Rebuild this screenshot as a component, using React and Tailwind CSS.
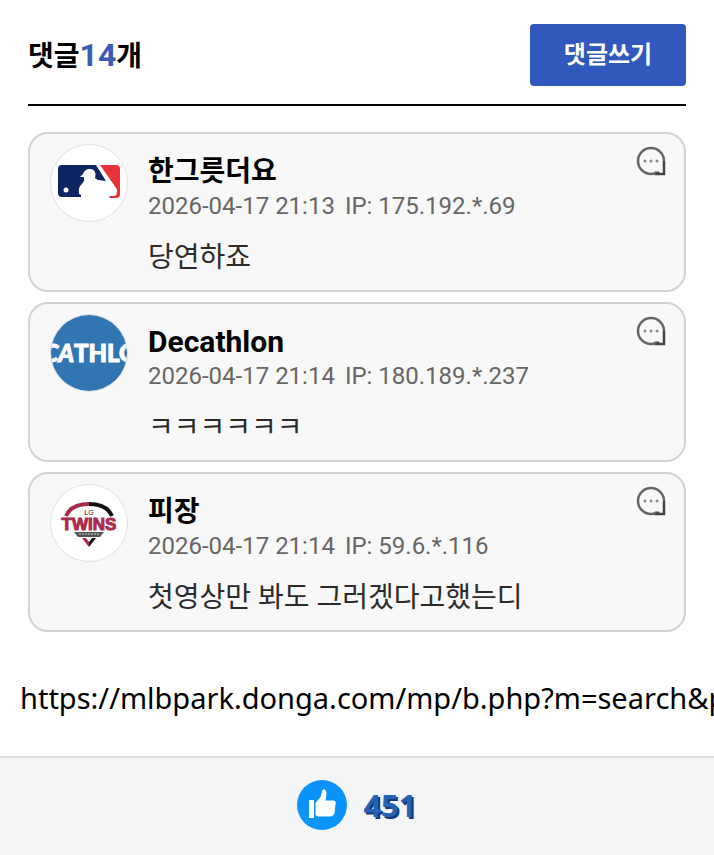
const MlbLogo = () => (
  <svg viewBox="0 0 76 76" className="size-full">
    <path
      d="M11 20H45L55 36l-8-1-3-2c1-3 1-9-5-9-4 0-6 2-7 5l-3 3h4v4l-2 3c-4 3-3 7-3 10l2 1v2H11a4 4 0 0 1-4-4V24a4 4 0 0 1 4-4z"
      fill="#0f2463"
    />
    <path
      d="M49 20h16a4 4 0 0 1 4 4v25a4 4 0 0 1-4 4h-6c-1-1-1-2 0-2h3c3 0 4-2 4-5 0-3-2-4-3-6z"
      fill="#e8323c"
    />
    <circle cx="15" cy="45" r="2.5" fill="#fff" />
  </svg>
);

const DecathlonLogo = () => (
  <svg viewBox="0 0 76 76" className="size-full">
    <rect width="76" height="76" fill="#3275b3" />
    <text
      x="40"
      y="47"
      textAnchor="middle"
      fill="#fff"
      stroke="#fff"
      strokeWidth="1"
      className="font-['Lato'] text-[24px] font-black"
    >
      <tspan className="italic">CA</tspan>THLO
    </text>
  </svg>
);

const TwinsLogo = () => (
  <svg viewBox="0 0 76 76" className="size-full">
    <path d="M15 31C19 22 29 19 38 19" fill="none" stroke="#a92a4b" strokeWidth="4" />
    <path d="M38 19c9 0 19 3 23 12" fill="none" stroke="#111" strokeWidth="4" />
    <text x="38" y="30" textAnchor="middle" fill="#222" className="font-['Liberation_Sans'] text-[7px]">
      LG
    </text>
    <text
      x="38"
      y="45"
      textAnchor="middle"
      fill="#a92a4b"
      stroke="#a92a4b"
      strokeWidth="1"
      className="font-['Liberation_Sans'] text-[17px] font-bold"
    >
      TWINS
    </text>
    <path d="M23 47h30l-4 5H27z" fill="#555" />
    <path d="M28 49h20" stroke="#ccc" strokeDasharray="2 1" />
    <path d="M31 53h4l3 4v5z" fill="#a92a4b" />
    <path d="M45 53h-4l-3 4v5z" fill="#111" />
  </svg>
);

const ReplyIcon = () => (
  <svg viewBox="0 0 30 30" className="size-full" fill="none">
    <path d="M28 15A13 13 0 1 0 15 28c3 0 4-1 6-2" stroke="#666" strokeWidth="2.5" />
    <path d="M28 15v13h-7l2-2" stroke="#444" strokeWidth="2.5" />
    <g fill="#888">
      <circle cx="9" cy="15" r="1.5" />
      <circle cx="15" cy="15" r="1.5" />
      <circle cx="21" cy="15" r="1.5" />
    </g>
  </svg>
);

const ThumbIcon = () => (
  <svg viewBox="0 0 50 50" className="size-[50px]">
    <circle cx="25" cy="25" r="25" fill="#0a93fb" />
    <rect x="12" y="20" width="5" height="18" fill="#fff" />
    <path
      d="M19 23l5-6 2-7c2-1 3 1 3 4l-1 7h8c2 0 3 1 2 3l-1 9c0 2-2 3-4 3H21l-2-1z"
      fill="#fff"
      stroke="#fff"
      strokeLinejoin="round"
    />
  </svg>
);

const comments = [
  { id: 1, name: "한그릇더요", date: "2026-04-17 21:13", ip: "175.192.*.69", text: "당연하죠", Logo: MlbLogo },
  { id: 2, name: "Decathlon", date: "2026-04-17 21:14", ip: "180.189.*.237", text: "ㅋㅋㅋㅋㅋㅋ", Logo: DecathlonLogo },
  { id: 3, name: "피장", date: "2026-04-17 21:14", ip: "59.6.*.116", text: "첫영상만 봐도 그러겠다고했는디", Logo: TwinsLogo },
];

function Comment({ name, date, ip, text, Logo }) {
  // Latin letters run smaller than Hangul at the same size
  const nameSize = /^[a-z]/i.test(name) ? "text-[30px]" : "text-[28px]";

  return (
    <li className="flex items-start rounded-[20px] border-2 border-[#d2d2d2] bg-[#f8f8f8] pt-2.5 pr-[18px] pb-3 pl-5">
      <div className="size-[78px] shrink-0 overflow-hidden rounded-full border border-[#e2e2e2] bg-white">
        <Logo />
      </div>
      <div className="ml-5 min-w-0 flex-1 pt-2.5">
        <h3 className={`${nameSize} leading-[36px] font-bold text-black`}>{name}</h3>
        <p className="flex gap-2.5 text-[24px] leading-8 text-[#666]">
          <span>{date}</span>
          <span>IP: {ip}</span>
        </p>
        <p className="pt-4 text-[28px] leading-10 text-[#2b2b2b]">{text}</p>
      </div>
      <button type="button" aria-label="답글" className="mt-0.5 size-[30px] shrink-0">
        <ReplyIcon />
      </button>
    </li>
  );
}

export default function App() {
  return (
    <div className="flex min-h-screen flex-col overflow-x-hidden bg-white font-['Roboto','Noto_Sans_CJK_KR',sans-serif]">
      <section className="px-7 pt-6">
        <header className="flex items-center justify-between border-b-2 border-black pb-[18px]">
          <h2 className="text-[28px] font-bold text-black">
            댓글<span className="text-[32px] text-[#3c5bb5]">14</span>개
          </h2>
          <button
            type="button"
            className="h-[62px] w-[156px] rounded-[4px] bg-[#3058bd] text-[24px] font-bold text-white"
          >
            댓글쓰기
          </button>
        </header>
        <ul className="flex flex-col gap-2.5 pt-[26px]">
          {comments.map((c) => (
            <Comment key={c.id} {...c} />
          ))}
        </ul>
      </section>

      <p className="px-5 pt-[46px] pb-[38px] font-['Noto_Sans','Noto_Sans_CJK_KR',sans-serif] text-[29px] leading-10 whitespace-nowrap text-black">
        <a href="#link">https://mlbpark.donga.com/mp/b.php?m=search&amp;p</a>
      </p>

      <footer className="flex grow items-start justify-center border-t-2 border-[#dedfe0] bg-[#f4f5f6] pt-[22px] pb-6">
        <button type="button" aria-label="추천 451" className="flex items-center gap-4">
          <ThumbIcon />
          <span className="font-['Noto_Sans',sans-serif] text-[31px] font-bold text-[#2463b4] [text-shadow:2px_2px_0_#113a78]">
            451
          </span>
        </button>
      </footer>
    </div>
  );
}
